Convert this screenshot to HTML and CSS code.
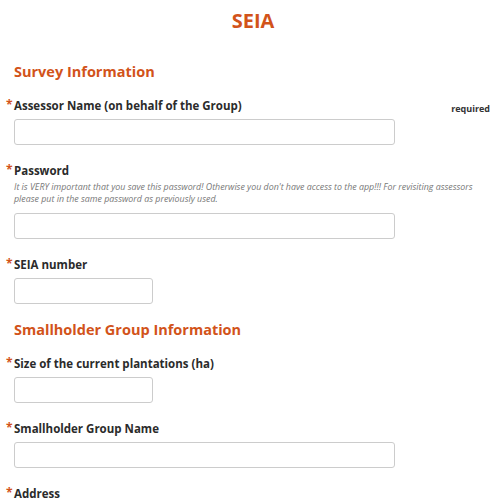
FILE: index.html
```html
<!DOCTYPE html>
<html>
<head>
<meta charset="utf-8">
<link rel="stylesheet" href="styles.css">
</head>
<body>
<div class="page">
  <h1 class="title">SEIA</h1>
  <h2 class="section">Survey Information</h2>
  <div class="field">
    <div class="label-row">
      <label class="label"><span class="star">*</span>Assessor Name (on behalf of the Group)</label>
      <span class="required">required</span>
    </div>
    <input class="input wide" type="text">
  </div>
  <div class="field">
    <label class="label"><span class="star">*</span>Password</label>
    <p class="help">It is VERY important that you save this password! Otherwise you don't have access to the app!!! For revisiting assessors please put in the same password as previously used.</p>
    <input class="input wide after-help" type="text">
  </div>
  <div class="field">
    <label class="label"><span class="star">*</span>SEIA number</label>
    <input class="input narrow" type="text">
  </div>
  <h2 class="section second">Smallholder Group Information</h2>
  <div class="field">
    <label class="label"><span class="star">*</span>Size of the current plantations (ha)</label>
    <input class="input narrow" type="text">
  </div>
  <div class="field">
    <label class="label"><span class="star">*</span>Smallholder Group Name</label>
    <input class="input wide" type="text">
  </div>
  <div class="field">
    <label class="label"><span class="star">*</span>Address</label>
  </div>
</div>
</body>
</html>
```
FILE: styles.css
```css
html, body {
  margin: 0;
  padding: 0;
  background: #fff;
}
body {
  font-family: "Open Sans", "DejaVu Sans", sans-serif;
  color: #333;
}
.page {
  padding: 7px 10px 0 14px;
}
.title {
  margin: 0;
  font-size: 20px;
  line-height: 28px;
  font-weight: 700;
  color: #d2531a;
  text-align: center;
  padding-left: 2px;
}
.section {
  margin: 26px 0 0;
  font-size: 14.5px;
  line-height: 22px;
  font-weight: 700;
  color: #d2531a;
}
.section.second {
  margin-top: 15px;
}
.field {
  margin-top: 17px;
}
.section + .field {
  margin-top: 14px;
}
.label-row {
  display: flex;
  justify-content: space-between;
  align-items: baseline;
}
.label {
  display: block;
  position: relative;
  font-size: 11.5px;
  line-height: 18px;
  font-weight: 700;
  color: #2b2b2b;
}
.star {
  position: absolute;
  left: -8px;
  top: -1px;
  color: #d2531a;
  font-size: 12px;
}
.required {
  font-size: 9px;
  font-weight: 700;
  color: #333;
  position: relative;
  top: 2px;
}
.help {
  margin: 1px 0 0;
  font-size: 8.85px;
  line-height: 12px;
  font-style: italic;
  color: #777;
}
.input {
  display: block;
  box-sizing: border-box;
  height: 26px;
  margin-top: 4px;
  border: 1px solid #ccc;
  border-radius: 3px;
  background: #fff;
  padding: 0 6px;
}
.input.after-help {
  margin-top: 8px;
}
.wide {
  width: 381px;
}
.narrow {
  width: 139px;
}
```
